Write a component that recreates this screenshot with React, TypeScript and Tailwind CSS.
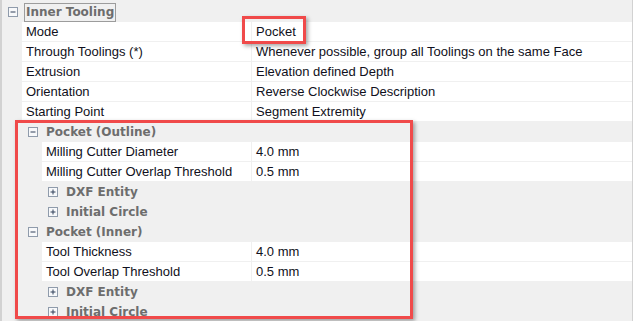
import React from "react";

type Node =
  | { kind: "group"; label: string; open: boolean; focus?: boolean; children?: Node[] }
  | { kind: "prop"; label: string; value: string };

const TREE: Node[] = [
  {
    kind: "group",
    label: "Inner Tooling",
    open: true,
    focus: true,
    children: [
      { kind: "prop", label: "Mode", value: "Pocket" },
      { kind: "prop", label: "Through Toolings (*)", value: "Whenever possible, group all Toolings on the same Face" },
      { kind: "prop", label: "Extrusion", value: "Elevation defined Depth" },
      { kind: "prop", label: "Orientation", value: "Reverse Clockwise Description" },
      { kind: "prop", label: "Starting Point", value: "Segment Extremity" },
      {
        kind: "group",
        label: "Pocket (Outline)",
        open: true,
        children: [
          { kind: "prop", label: "Milling Cutter Diameter", value: "4.0 mm" },
          { kind: "prop", label: "Milling Cutter Overlap Threshold", value: "0.5 mm" },
          { kind: "group", label: "DXF Entity", open: false },
          { kind: "group", label: "Initial Circle", open: false },
        ],
      },
      {
        kind: "group",
        label: "Pocket (Inner)",
        open: true,
        children: [
          { kind: "prop", label: "Tool Thickness", value: "4.0 mm" },
          { kind: "prop", label: "Tool Overlap Threshold", value: "0.5 mm" },
          { kind: "group", label: "DXF Entity", open: false },
          { kind: "group", label: "Initial Circle", open: false },
        ],
      },
    ],
  },
];

// left offsets per depth (container already has a 2px left border)
const GROUP_INDENTS = ["w-[6px]", "w-[26px]", "w-[46px]"];
const PROP_INDENTS = ["w-0", "w-[20px]", "w-[40px]"];

function Toggle({ open }: { open: boolean }) {
  return (
    <svg width="10" height="10" viewBox="0 0 10 10" className="shrink-0">
      <rect x="0.5" y="0.5" width="9" height="9" fill="#f7f8fa" stroke="#8f9bab" />
      <path d="M2.5 5H7.5" stroke="#30405a" strokeWidth="1" />
      {!open && <path d="M5 2.5V7.5" stroke="#30405a" strokeWidth="1" />}
    </svg>
  );
}

function Rows({ nodes, level }: { nodes: Node[]; level: number }) {
  return (
    <>
      {nodes.map((n, i) =>
        n.kind === "group" ? (
          <React.Fragment key={i}>
            <div className="flex h-[20px] items-center">
              <div className={`${GROUP_INDENTS[level]} shrink-0`} />
              <Toggle open={n.open} />
              <div
                className={`ml-[6px] h-[19px] flex items-center px-[1px] font-bold text-[12px] text-[#6d6d6d] ${
                  n.focus ? "border border-[#9c9c9c]" : "border border-transparent"
                }`}
                style={{ fontFamily: "'DejaVu Sans', Verdana, sans-serif" }}
              >
                {n.label}
              </div>
            </div>
            {n.open && n.children && <Rows nodes={n.children} level={level + 1} />}
          </React.Fragment>
        ) : (
          <div key={i} className="flex h-[20px]">
            <div className={`${PROP_INDENTS[level]} shrink-0`} />
            <div className="flex-1 h-[19px] bg-white border-r border-[#f0f0f0] pl-[4px] flex items-center text-[#101020]">
              {n.label}
            </div>
            <div className="w-[380px] shrink-0 h-[19px] bg-white pl-[4px] flex items-center text-[#101020]">
              {n.value}
            </div>
          </div>
        )
      )}
    </>
  );
}

export default function App() {
  return (
    <div
      className="relative w-[633px] h-[321px] overflow-hidden bg-[#f0f0f0] text-[13px] leading-none"
      style={{ fontFamily: "'Liberation Sans', Arial, sans-serif" }}
    >
      <div className="h-full border-l-2 border-r border-[#d2d2d2] pt-[2px]">
        <Rows nodes={TREE} level={0} />
      </div>

      {/* highlight annotations */}
      <div className="absolute left-[242px] top-[16px] w-[64px] h-[28px] border-[3px] border-[#f04a4a] shadow-[2px_2px_4px_rgba(0,0,0,0.35)]" />
      <div className="absolute left-[15px] top-[120px] w-[398px] h-[199px] border-[3px] border-[#f04a4a] shadow-[2px_2px_4px_rgba(0,0,0,0.35)]" />
    </div>
  );
}
